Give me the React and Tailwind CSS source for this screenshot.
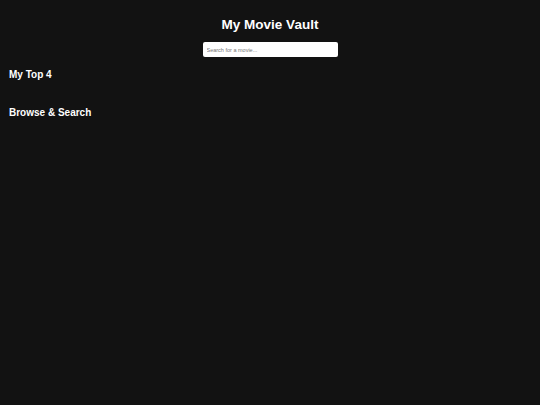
export default function App() {
  return (
    <div
      className="min-h-screen bg-[#121212] text-white"
      style={{ fontFamily: '"Liberation Sans", Arial, sans-serif' }}
    >
      <header className="flex flex-col items-center pt-[15px]">
        <h1 className="text-[13.5px] font-bold leading-[20px]">My Movie Vault</h1>
        <input
          type="text"
          placeholder="Search for a movie..."
          className="mt-[7px] h-[15px] w-[135px] rounded-[2px] bg-white px-[4px] text-[5.5px] text-black placeholder:text-[#777] outline-none"
        />
      </header>
      <section className="px-[9px] pt-[11px]">
        <h2 className="text-[10px] font-bold leading-[14px]">My Top 4</h2>
      </section>
      <section className="px-[9px] pt-[24px]">
        <h2 className="text-[10px] font-bold leading-[14px]">Browse &amp; Search</h2>
      </section>
    </div>
  );
}
